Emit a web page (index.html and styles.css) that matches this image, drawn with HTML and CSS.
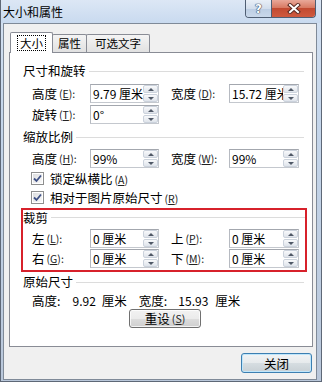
FILE: index.html
```html
<!DOCTYPE html>
<html>
<head>
<meta charset="utf-8">
<link rel="stylesheet" href="styles.css">
</head>
<body>
<div class="window">
  <div class="titlebar">
    <span class="title">大小和属性</span>
    <div class="caps">
      <div class="cap help"><span>?</span></div>
      <div class="cap close">
        <svg width="14" height="11" viewBox="0 0 14 11"><path d="M3 2 L11 9 M11 2 L3 9" stroke="#5a2a22" stroke-width="4" stroke-linecap="square" fill="none"/><path d="M3 2 L11 9 M11 2 L3 9" stroke="#fff" stroke-width="2" stroke-linecap="square" fill="none"/></svg>
      </div>
    </div>
  </div>
  <div class="frame">
    <div class="client">
      <div class="tabs">
        <div class="tab active"><span class="focus">大小</span></div>
        <div class="tab">属性</div>
        <div class="tab wide">可选文字</div>
      </div>
      <div class="panel">
        <div class="ghead">尺寸和旋转</div>
        <div class="grid">
          <label class="lbl">高度<span class="k">(<u>E</u>):</span></label>
          <div class="spin"><span class="val">9.79 厘米</span><span class="arrows"><i class="up"></i><i class="dn"></i></span></div>
          <label class="lbl r">宽度<span class="k">(<u>D</u>):</span></label>
          <div class="spin"><span class="val">15.72 厘米</span><span class="arrows"><i class="up"></i><i class="dn"></i></span></div>
          <label class="lbl">旋转<span class="k">(<u>T</u>):</span></label>
          <div class="spin"><span class="val">0°</span><span class="arrows"><i class="up"></i><i class="dn"></i></span></div>
        </div>

        <div class="ghead g2">缩放比例</div>
        <div class="grid g2">
          <label class="lbl">高度<span class="k">(<u>H</u>):</span></label>
          <div class="spin"><span class="val">99%</span><span class="arrows"><i class="up"></i><i class="dn"></i></span></div>
          <label class="lbl r">宽度<span class="k">(<u>W</u>):</span></label>
          <div class="spin"><span class="val">99%</span><span class="arrows"><i class="up"></i><i class="dn"></i></span></div>
        </div>
        <div class="check c1">
          <span class="cb"><svg width="9" height="9" viewBox="0 0 9 9"><path d="M1 4.5 L3.5 7 L8 1.5" fill="none" stroke="#3f5185" stroke-width="1.8"/></svg></span>
          <span>锁定纵横比<span class="k">(<u>A</u>)</span></span>
        </div>
        <div class="check c2">
          <span class="cb"><svg width="9" height="9" viewBox="0 0 9 9"><path d="M1 4.5 L3.5 7 L8 1.5" fill="none" stroke="#3f5185" stroke-width="1.8"/></svg></span>
          <span>相对于图片原始尺寸<span class="k">(<u>R</u>)</span></span>
        </div>

        <div class="redbox">
          <div class="ghead g3">裁剪</div>
          <div class="grid g3">
            <label class="lbl">左<span class="k">(<u>L</u>):</span></label>
            <div class="spin"><span class="val">0 厘米</span><span class="arrows"><i class="up"></i><i class="dn"></i></span></div>
            <label class="lbl r">上<span class="k">(<u>P</u>):</span></label>
            <div class="spin"><span class="val">0 厘米</span><span class="arrows"><i class="up"></i><i class="dn"></i></span></div>
            <label class="lbl">右<span class="k">(<u>G</u>):</span></label>
            <div class="spin"><span class="val">0 厘米</span><span class="arrows"><i class="up"></i><i class="dn"></i></span></div>
            <label class="lbl r">下<span class="k">(<u>M</u>):</span></label>
            <div class="spin"><span class="val">0 厘米</span><span class="arrows"><i class="up"></i><i class="dn"></i></span></div>
          </div>
        </div>

        <div class="ghead g4">原始尺寸</div>
        <div class="info">
          <span>高度:</span><span class="n1">9.92</span><span class="u1">厘米</span><span class="l2">宽度:</span><span class="n2">15.93</span><span class="u2">厘米</span>
        </div>
        <div class="resetrow"><button class="btn reset">重设<span class="k">(<u>S</u>)</span></button></div>
      </div>
      <div class="footer"><button class="btn default">关闭</button></div>
    </div>
  </div>
</div>
</body>
</html>
```
FILE: styles.css
```css
* { box-sizing: border-box; margin: 0; padding: 0; }
html, body { width: 322px; height: 382px; overflow: hidden; }
body {
  font-family: "Noto Sans CJK SC", "Liberation Sans", sans-serif;
  font-size: 12px;
  color: #000;
  background: #fff;
}
.window {
  width: 322px;
  height: 382px;
  display: flex;
  flex-direction: column;
  background: linear-gradient(#d5e2f2 0%, #c5d6eb 30%, #b9c7da 100%);
  border: 1px solid #5e6877;
  border-top: none;
}
.titlebar {
  height: 23px;
  flex: none;
  display: flex;
  justify-content: space-between;
  align-items: flex-start;
  padding-left: 2px;
  background: linear-gradient(#dce7f5, #c9daef);
}
.title { line-height: 23px; font-size: 12px; }
.caps {
  display: flex;
  margin-right: 5px;
  border: 1px solid #4f5e73;
  border-top: none;
  border-radius: 0 0 4px 4px;
  overflow: hidden;
  height: 18px;
}
.cap { height: 17px; display: flex; align-items: center; justify-content: center; }
.help {
  width: 26px;
  background: linear-gradient(#e9eff7 0%, #d3deec 50%, #bccde3 51%, #c9d8ea 100%);
  border-right: 1px solid #4f5e73;
}
.help span {
  color: #fff;
  font: bold 12px "DejaVu Sans", sans-serif;
  text-shadow: 0 0 1px #2d3e58, 0 0 1px #2d3e58, 0 0 1px #2d3e58;
}
.close {
  width: 43px;
  background: linear-gradient(#e9a899 0%, #d87a63 45%, #c24a31 50%, #cf5a3f 100%);
}
.frame {
  flex: 1;
  display: flex;
  padding: 0 4px 1px 2px;
}
.client {
  flex: 1;
  display: flex;
  flex-direction: column;
  background: #f0f0f0;
  border: 1px solid #7f8a98;
  padding: 8px 3px 0 5px;
}
.tabs {
  height: 20px;
  display: flex;
  align-items: flex-end;
  margin-left: 1px;
  flex: none;
}
.tab {
  height: 18px;
  border: 1px solid #898c95;
  border-bottom: none;
  background: linear-gradient(#f4f4f4, #e1e1e1);
  font-size: 11.5px;
  line-height: 17px;
  padding: 0 5px;
  margin-left: -1px;
  border-radius: 2px 2px 0 0;
}
.tab.wide { padding: 0 8px; }
.tab.active {
  height: 21px;
  margin: 0 0 -1px 0;
  padding: 0 6px;
  background: #fff;
  position: relative;
  z-index: 1;
  display: flex;
  align-items: center;
}
.focus {
  border: 1px dotted #000;
  padding: 0 2px;
  line-height: 14px;
  display: block;
}
.panel {
  flex: 1;
  background: #fff;
  border: 1px solid #898c95;
  padding: 10px 8px 0 13px;
  display: flex;
  flex-direction: column;
}
.ghead {
  height: 16px;
  line-height: 16px;
  display: flex;
  align-items: center;
  gap: 3px;
  white-space: nowrap;
  font-size: 12.5px;
}
.ghead::after {
  content: "";
  flex: 1;
  height: 1px;
  background: #dcdcdc;
}
.ghead.g2 { margin-top: 5px; }
.ghead.g3 { height: 15px; line-height: 15px; }
.ghead.g4 { margin-top: 2px; }
.grid {
  display: grid;
  grid-template-columns: 58px 69px 70px 70px;
  grid-auto-rows: 19px;
  row-gap: 2px;
  padding-left: 9px;
  margin-top: 5px;
}
.grid.g2 { margin-top: 4px; }
.grid.g3 { margin-top: 4px; row-gap: 1px; }
.lbl {
  display: flex;
  align-items: center;
  white-space: nowrap;
  font-size: 12.5px;
}
.lbl.r { padding-left: 12px; }
.k { font-size: 10.5px; margin-left: 2px; color: #222; }
.k u { text-decoration: underline; }
.spin {
  display: flex;
  height: 19px;
  background: #fff;
  border: 1px solid #c4c8ce;
  border-top-color: #a3a7ae;
  border-left-color: #b6bac1;
}
.val {
  flex: 1;
  overflow: hidden;
  white-space: nowrap;
  padding-left: 2px;
  line-height: 17px;
  font-size: 12px;
}
.arrows {
  width: 15px;
  display: flex;
  flex-direction: column;
  gap: 1px;
  flex: none;
}
.arrows i {
  flex: 1;
  border: 1px solid #cbd2dc;
  border-radius: 2px;
  background: linear-gradient(#f8f9fb, #dfe4eb);
  display: flex;
  align-items: center;
  justify-content: center;
}
.arrows .up::before {
  content: "";
  border-left: 3px solid transparent;
  border-right: 3px solid transparent;
  border-bottom: 3px solid #505967;
}
.arrows .dn::before {
  content: "";
  border-left: 3px solid transparent;
  border-right: 3px solid transparent;
  border-top: 3px solid #505967;
}
.check {
  height: 16px;
  display: flex;
  align-items: center;
  gap: 6px;
  padding-left: 8px;
  font-size: 12.5px;
  white-space: nowrap;
}
.check.c1 { margin-top: 2px; }
.check.c2 { margin-top: 3px; }
.cb {
  width: 13px;
  height: 13px;
  border: 1px solid #8e8f8f;
  background: linear-gradient(135deg, #dadbdd, #fbfbfb);
  box-shadow: inset 0 0 0 1px #fff;
  display: flex;
  align-items: center;
  justify-content: center;
}
.redbox {
  margin: 3px -3px 0 -2px;
  border: 2px solid #d7212b;
  padding-bottom: 2px;
}
.info {
  height: 16px;
  margin-top: 2px;
  padding-left: 9px;
  display: flex;
  align-items: center;
  white-space: nowrap;
  font-size: 12.5px;
}
.info .n1 { margin-left: 12px; font-size: 12px; }
.info .u1 { margin-left: 6px; }
.info .l2 { margin-left: 12px; }
.info .n2 { margin-left: 11px; font-size: 12px; }
.info .u2 { margin-left: 7px; }
.resetrow { margin-top: 1px; display: flex; }
.btn {
  font-family: inherit;
  font-size: 12.5px;
  color: #000;
  border: 1px solid #707070;
  border-radius: 3px;
  background: linear-gradient(#f2f2f2 0%, #ebebeb 50%, #dddddd 51%, #cfcfcf 100%);
  box-shadow: inset 0 0 0 1px rgba(255,255,255,0.75);
  display: flex;
  align-items: center;
  justify-content: center;
}
.reset { width: 72px; height: 19px; margin-left: 106px; }
.footer {
  height: 32px;
  flex: none;
  display: flex;
  justify-content: flex-end;
  align-items: flex-start;
  padding: 6px 1px 0 0;
}
.default {
  width: 71px;
  height: 20px;
  border-color: #3c7fb1;
  box-shadow: inset 0 0 0 1px #bfe6fb;
  background: linear-gradient(#eaf6fd 0%, #d9f0fc 50%, #bee6fd 51%, #a7d9f5 100%);
  background: linear-gradient(#f2f4f5 0%, #e6eaec 50%, #d6dde1 51%, #c8d0d5 100%);
}
```
